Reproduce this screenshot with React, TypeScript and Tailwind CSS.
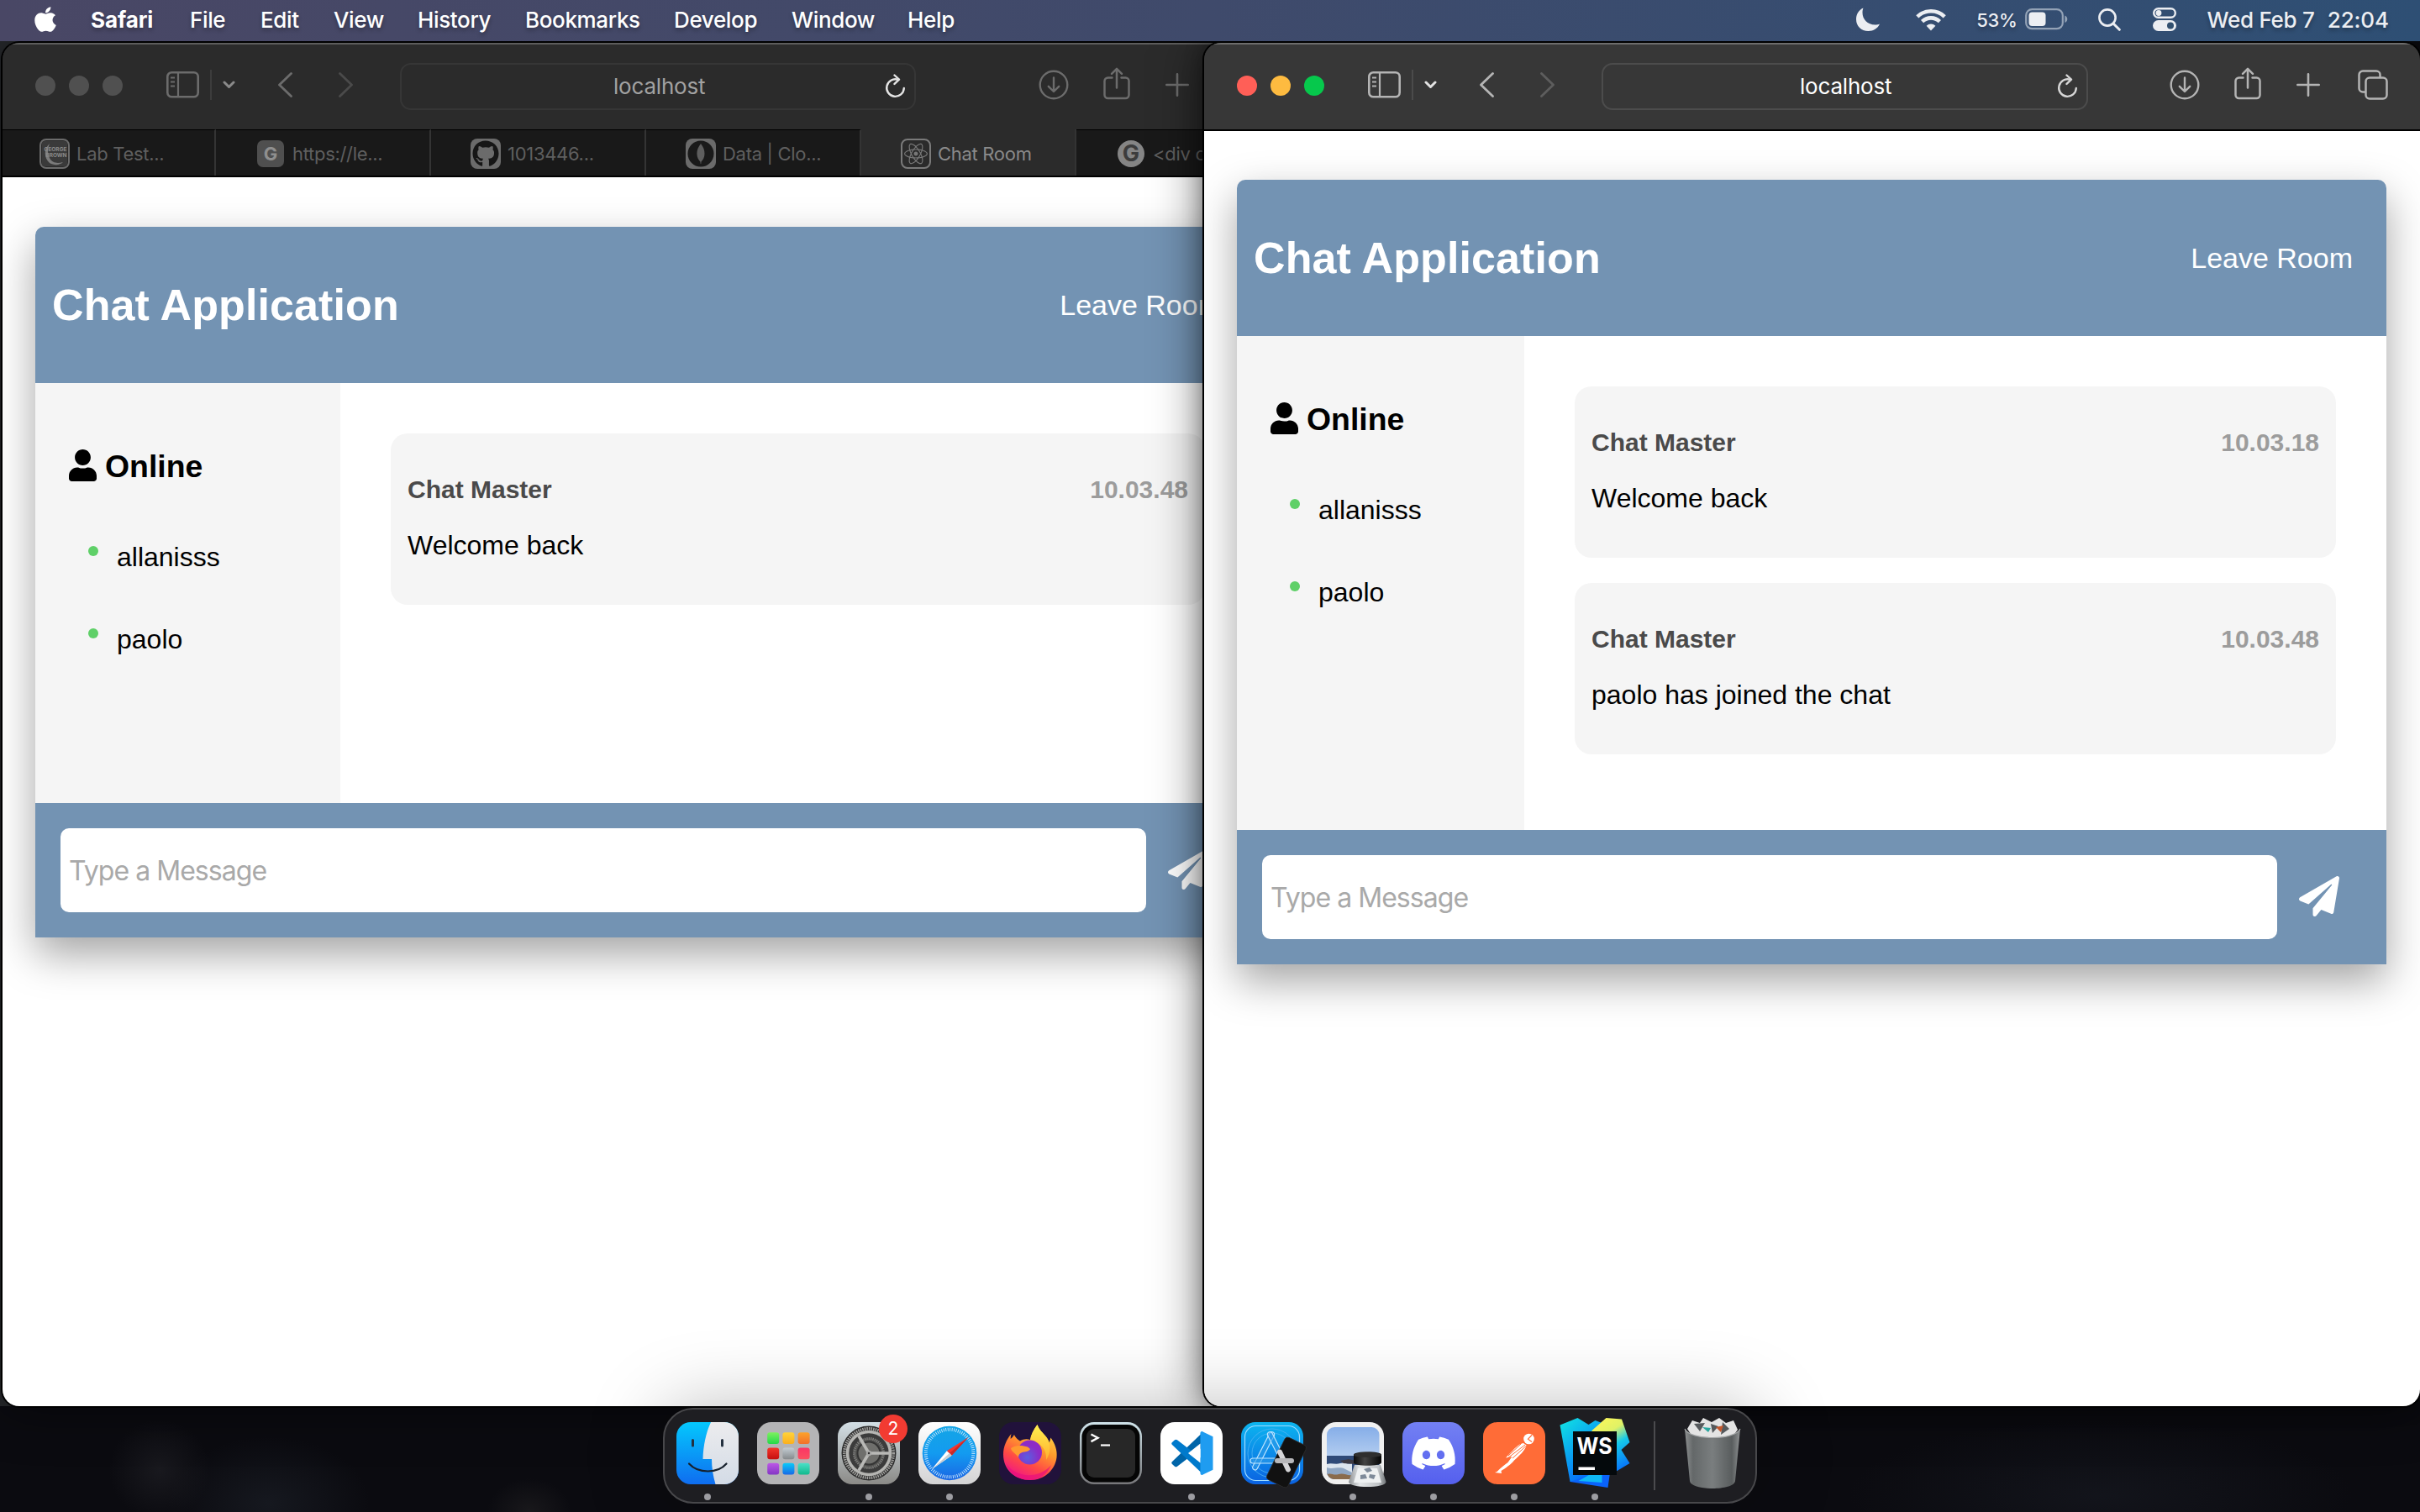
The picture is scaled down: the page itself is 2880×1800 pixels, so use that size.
import type { ReactNode } from "react";
import { FaApple, FaGithub, FaReact, FaDiscord, FaUser, FaPaperPlane } from "react-icons/fa";

/* ---------- menu bar ---------- */

const menus = [
  { label: "File", cls: "w-[84px]" },
  { label: "Edit", cls: "w-[87px]" },
  { label: "View", cls: "w-[100px]" },
  { label: "History", cls: "w-[128px]" },
  { label: "Bookmarks", cls: "w-[177px]" },
  { label: "Develop", cls: "w-[140px]" },
  { label: "Window", cls: "w-[138px]" },
  { label: "Help", cls: "w-[90px]" },
];

function MenuBar() {
  return (
    <header className="relative z-30 flex h-[49px] w-full items-center bg-linear-to-r from-[#494765] via-[#3f4a6b] to-[#2e4f74] pb-[3px] text-[26px] tracking-[-0.35px] text-white [text-shadow:0_3px_5px_rgba(0,0,0,0.3)]">
      <FaApple className="ml-[41px] h-[34px] w-[26px]" preserveAspectRatio="none" />
      <span className="ml-[41px] w-[118px] shrink-0 font-bold tracking-[-0.1px]">Safari</span>
      {menus.map((m) => (
        <span key={m.label} className={`shrink-0 font-medium whitespace-nowrap ${m.cls}`}>
          {m.label}
        </span>
      ))}
      <div className="ml-auto flex items-center pr-[37px] text-[#eceef2]">
        <svg className="h-[30px] w-[30px]" viewBox="0 0 30 30">
          <path d="M9.5 1.5C3.500 4 1 9.500 1 15c0 8 6 14 14.500 14 6 0 11-3 13.500-8.500-1.500.6-3.500 1-5.500 1C14.500 21.500 8.500 15 8.500 7c0-2 .3-4 1-5.500z" fill="currentColor" />
        </svg>
        <svg className="ml-[42px] h-[27px] w-[36px]" viewBox="0 0 36 27" fill="none" stroke="currentColor">
          <path d="M1.800 9.800a23.500 23.500 0 0 1 32.400 0" strokeWidth="4.600" />
          <path d="M7.600 15.600a15 15 0 0 1 20.800 0" strokeWidth="4.600" />
          <path d="M18 26.500l-5.400-5.800a8 8 0 0 1 10.800 0z" fill="currentColor" stroke="none" />
        </svg>
        <span className="ml-[36px] pt-[2px] text-[22px] font-medium tracking-[-0.4px]">53%</span>
        <svg className="ml-[10px] h-[26px] w-[51px]" viewBox="0 0 51 26">
          <rect x="1.200" y="1.200" width="43.600" height="23" rx="7" fill="none" stroke="#93a2b6" strokeWidth="2.200" />
          <rect x="4.500" y="4.500" width="20" height="16.500" rx="4" fill="currentColor" />
          <path d="M47.300 8.500c2 .8 3 2.400 3 4.200s-1 3.400-3 4.200z" fill="#93a2b6" />
        </svg>
        <svg className="ml-[36px] h-[27px] w-[27px]" viewBox="0 0 27 27" fill="none" stroke="currentColor" strokeLinecap="round">
          <circle cx="11" cy="11" r="9.600" strokeWidth="2.600" />
          <path d="M18 18l7.300 7.300" strokeWidth="3" />
        </svg>
        <svg className="ml-[38px] h-[28px] w-[28px]" viewBox="0 0 28 28">
          <rect x="1.200" y="1.200" width="25.600" height="10.600" rx="5.300" fill="none" stroke="currentColor" strokeWidth="2.400" />
          <circle cx="7" cy="6.500" r="3.400" fill="currentColor" />
          <rect x="0" y="15" width="28" height="13" rx="6.500" fill="currentColor" />
          <circle cx="21" cy="21.500" r="4" fill="#32506f" />
        </svg>
        <span className="ml-[36px] font-medium whitespace-nowrap tracking-[-0.25px]">Wed Feb 7</span>
        <span className="ml-[15px] font-medium tracking-[-0.1px]">22:04</span>
      </div>
    </header>
  );
}

/* ---------- Safari chrome ---------- */

function SidebarIcon() {
  return (
    <svg className="h-[32px] w-[39px] shrink-0" viewBox="0 0 39 32" fill="none" stroke="currentColor">
      <rect x="1.300" y="1.300" width="36.400" height="29" rx="5" strokeWidth="2.600" />
      <path d="M14 1v30" strokeWidth="2.200" />
      <path d="M5 7.500h5M5 12.500h5M5 17.500h5" strokeWidth="2" />
    </svg>
  );
}

function ReloadIcon() {
  return (
    <svg className="h-[29px] w-[25px] shrink-0" viewBox="0 0 25 29" fill="none" stroke="currentColor" strokeWidth="2.400" strokeLinecap="round" strokeLinejoin="round">
      <path d="M15.500 6.700A10.300 10.300 0 1 0 22.800 17" />
      <path d="M11.500 1.500l5.500 5.200-5.500 5.200" />
    </svg>
  );
}

function DownloadIcon() {
  return (
    <svg className="h-[36px] w-[36px] shrink-0" viewBox="0 0 36 36" fill="none" stroke="currentColor" strokeWidth="2.400" strokeLinecap="round" strokeLinejoin="round">
      <circle cx="18" cy="18" r="16.300" />
      <path d="M18 9.500v16M11.800 19.800l6.200 6.200 6.200-6.200" />
    </svg>
  );
}

function ShareIcon() {
  return (
    <svg className="h-[39px] w-[32px] shrink-0" viewBox="0 0 32 39" fill="none" stroke="currentColor" strokeWidth="2.500" strokeLinecap="round" strokeLinejoin="round">
      <path d="M10.500 12.500H5.500a4 4 0 0 0-4 4V33a4 4 0 0 0 4 4h21a4 4 0 0 0 4-4V16.500a4 4 0 0 0-4-4h-5" />
      <path d="M16 24.500V2M10 7.800L16 1.800l6 6" />
    </svg>
  );
}

function PlusIcon() {
  return (
    <svg className="h-[28px] w-[28px] shrink-0" viewBox="0 0 28 28" fill="none" stroke="currentColor" strokeWidth="2.600" strokeLinecap="round">
      <path d="M14 1.300v25.400M1.300 14h25.400" />
    </svg>
  );
}

function TabsIcon() {
  return (
    <svg className="h-[36px] w-[36px] shrink-0" viewBox="0 0 36 36" fill="none" stroke="currentColor" strokeWidth="2.500" strokeLinejoin="round">
      <rect x="9.500" y="9.500" width="25" height="25" rx="4.500" />
      <path d="M9.500 26.500H6a4.500 4.500 0 0 1-4.500-4.500V6A4.500 4.500 0 0 1 6 1.500h16A4.500 4.500 0 0 1 26.500 6v3.500" />
    </svg>
  );
}

function Chevron({ dir, cls }: { dir: "left" | "right"; cls: string }) {
  return (
    <svg className={`h-[30px] w-[17px] shrink-0 ${cls}`} viewBox="0 0 17 30" fill="none" stroke="currentColor" strokeWidth="2.800" strokeLinecap="round" strokeLinejoin="round">
      <path d={dir === "left" ? "M15.500 1.500L1.500 15l14 13.500" : "M1.500 1.500L15.500 15l-14 13.500"} />
    </svg>
  );
}

function TrafficLights({ active }: { active: boolean }) {
  return (
    <div className="mt-[2px] flex shrink-0 gap-[16px]">
      <span className={`size-[24px] rounded-full ${active ? "bg-[#ff5f57]" : "bg-[#505050]"}`} />
      <span className={`size-[24px] rounded-full ${active ? "bg-[#febb40]" : "bg-[#505050]"}`} />
      <span className={`size-[24px] rounded-full ${active ? "bg-[#06c84c]" : "bg-[#505050]"}`} />
    </div>
  );
}

function Toolbar({ active }: { active: boolean }) {
  return (
    <div
      className={`flex h-[103px] shrink-0 items-center overflow-hidden border-t-2 pb-[5px] ${
        active ? "border-[#6d6d6d] bg-[#373737] pl-[39px] text-[#b4b4b4]" : "border-[#5d5d5d] bg-[#2b2b2b] pl-[39px] text-[#6c6c6c]"
      }`}
    >
      <TrafficLights active={active} />
      <div className="ml-[52px] flex shrink-0 items-center">
        <SidebarIcon />
        <span className={`ml-[13px] h-[36px] w-[2px] ${active ? "bg-[#4b4b4b]" : "bg-[#3c3c3c]"}`} />
        <svg className={`ml-[13px] h-[10px] w-[15px] ${active ? "text-[#e2e2e2]" : "text-[#8a8a8a]"}`} viewBox="0 0 15 10" fill="none" stroke="currentColor" strokeWidth="3" strokeLinecap="round" strokeLinejoin="round">
          <path d="M2 2l5.500 5.500L13 2" />
        </svg>
      </div>
      <Chevron dir="left" cls="ml-[51px]" />
      <Chevron dir="right" cls={active ? "ml-[55px] text-[#5d5d5d]" : "ml-[55px] text-[#4a4a4a]"} />
      <div
        className={`mt-[3px] flex h-[56px] shrink-0 items-center rounded-[13px] border-2 pr-[10px] ${
          active ? "ml-[56px] w-[579px] border-[#4c4c4c] pl-[234px] text-white" : "ml-[56px] w-[614px] border-[#363636] pl-[252px] text-[#a2a2a2]"
        }`}
      >
        <span className="text-[26px] tracking-[-0.2px]">localhost</span>
        <span className={`ml-auto ${active ? "text-[#d6d6d6]" : "text-[#e4e4e4]"}`}>
          <ReloadIcon />
        </span>
      </div>
      <span className={`shrink-0 ${active ? "ml-[97px]" : "ml-[146px]"}`}>
        <DownloadIcon />
      </span>
      <span className="mb-[3px] ml-[41px] shrink-0">
        <ShareIcon />
      </span>
      <span className="ml-[42px] shrink-0">
        <PlusIcon />
      </span>
      {active && (
        <span className="ml-[45px] shrink-0">
          <TabsIcon />
        </span>
      )}
    </div>
  );
}

function TabIconBox({ children }: { children: ReactNode }) {
  return <span className="flex size-[36px] shrink-0 items-center justify-center overflow-hidden rounded-[8px] bg-[#6b6b6b]">{children}</span>;
}

const tabs: { label: string; active?: boolean; icon: ReactNode }[] = [
  {
    label: "Lab Test...",
    icon: (
      <span className="flex size-[36px] shrink-0 items-center justify-center rounded-[8px] border-2 border-[#6b6b6b] bg-[#2a2a2a]">
        <svg className="size-[30px]" viewBox="0 0 30 30">
          <rect width="30" height="30" rx="3" fill="#3a3a3a" />
          <path d="M9 3C2 9 2 20 9 26c5 3 12 3 16-1-7 2-13 1-16-5-3-6-2-12 0-17z" fill="#7b7b7b" />
          <text x="16" y="12" textAnchor="middle" fontSize="6.500" fontWeight="700" fill="#8a8a8a">GEORGE</text>
          <text x="17" y="19" textAnchor="middle" fontSize="6.500" fontWeight="700" fill="#8a8a8a">BROWN</text>
        </svg>
      </span>
    ),
  },
  {
    label: "https://le...",
    icon: (
      <span className="mx-[2px] flex size-[32px] shrink-0 items-center justify-center rounded-[7px] bg-[#4f4f4f] text-[22px] font-bold text-[#8f8f8f]">G</span>
    ),
  },
  {
    label: "1013446...",
    icon: (
      <TabIconBox>
        <FaGithub className="size-[32px] text-[#161616]" />
      </TabIconBox>
    ),
  },
  {
    label: "Data | Clo...",
    icon: (
      <TabIconBox>
        <svg className="size-[34px]" viewBox="0 0 34 34">
          <circle cx="17" cy="17" r="15.500" fill="#1a1a1a" />
          <path d="M17 5c3 4 4.500 7.500 4.500 12 0 4.500-2 7.500-4 9.500L17.300 29h-.6l-.3-2.500c-2-2-4-5-4-9.500 0-4.500 1.600-8 4.600-12z" fill="#5f5f5f" />
        </svg>
      </TabIconBox>
    ),
  },
  {
    label: "Chat Room",
    active: true,
    icon: (
      <span className="flex size-[36px] shrink-0 items-center justify-center rounded-[8px] border-2 border-[#7a7a7a]">
        <FaReact className="size-[28px] text-[#777]" />
      </span>
    ),
  },
  {
    label: "<div class...",
    icon: (
      <span className="mx-[2px] flex size-[32px] shrink-0 items-center justify-center rounded-full bg-[#858585] text-[27px] font-bold text-[#3c3c3c]">G</span>
    ),
  },
];

function TabBar() {
  return (
    <div className="flex h-[57px] shrink-0 border-b-2 border-black">
      {tabs.map((t, i) => (
        <div
          key={t.label}
          className={`flex shrink-0 items-center gap-[8px] border-r-2 ${
            t.active ? "border-[#333] bg-[#2b2b2b] pt-[3px] text-[#8a8a8a]" : "border-t border-t-black border-r-[#343434] bg-[#191919] pt-[2px] text-[#5f5f5f]"
          } ${i === 0 ? "w-[254px] pl-[44px]" : "w-[256px] pl-[47px]"}`}
        >
          {t.icon}
          <span className="text-[22px] tracking-[-0.3px] whitespace-nowrap">{t.label}</span>
        </div>
      ))}
    </div>
  );
}

/* ---------- chat page ---------- */

interface Message {
  from: string;
  time: string;
  text: string;
}

function ChatPage({ messages, size, margin }: { messages: Message[]; size: string; margin: string }) {
  return (
    <div className="flex-1 overflow-hidden bg-white">
      <div className={`rounded-t-[10px] font-['Liberation_Sans',Arial,sans-serif] text-[32px] text-black shadow-[0_20px_50px_rgba(0,0,0,0.36)] ${margin}`}>
        <div className="flex h-[186px] items-center justify-between rounded-t-[10px] bg-[#7393b3] px-[20px] text-white">
          <h1 className="text-[52px] font-bold tracking-[0.1px]">Chat Application</h1>
          <a className="mr-[20px] pt-[1px] text-[34px]">Leave Room</a>
        </div>
        <div className={`flex bg-white ${size}`}>
          <aside className="w-1/4 shrink-0 bg-[#f5f5f5] pt-[77px] pl-[40px]">
            <h3 className="flex h-[44px] items-center gap-[10px] text-[37.4px] leading-[44px] font-bold">
              <FaUser className="mb-[2px] h-[38px] w-[33px]" preserveAspectRatio="none" />
              Online
            </h3>
            <ul className="mt-[68px] flex flex-col gap-[62px] leading-[36px]">
              {["allanisss", "paolo"].map((u) => (
                <li key={u} className="flex h-[36px] items-start">
                  <span className="mt-[5px] mr-[22px] ml-[23px] size-[12px] rounded-full bg-[#5fd068]" />
                  {u}
                </li>
              ))}
            </ul>
          </aside>
          <section className="flex flex-1 flex-col gap-[30px] p-[60px]">
            {messages.map((m) => (
              <article key={m.time} className="h-[204px] shrink-0 rounded-[20px] bg-[#f5f5f5] px-[20px] pt-[50px]">
                <div className="flex justify-between text-[30px] leading-[34px] font-bold">
                  <span className="text-[#4a4a4a]">{m.from}</span>
                  <span className="text-[#9c9c9c]">{m.time}</span>
                </div>
                <p className="mt-[31px] leading-[36px]">{m.text}</p>
              </article>
            ))}
          </section>
        </div>
        <form className="flex h-[160px] items-center bg-[#7393b3] pr-[56px] pl-[30px]">
          <input
            className="h-[100px] min-w-0 flex-1 rounded-[10px] bg-white px-[10px] font-['Inter',sans-serif] text-[32px] tracking-[-0.95px] placeholder:text-[#a9a9a9]"
            placeholder="Type a Message"
          />
          <FaPaperPlane className="mb-[2px] ml-[26px] size-[48px] shrink-0 text-white" />
        </form>
      </div>
    </div>
  );
}

/* ---------- dock ---------- */

function Tile({ children }: { children: ReactNode }) {
  return (
    <svg className="size-[74px] overflow-visible" viewBox="0 0 74 74">
      {children}
    </svg>
  );
}

function Finder() {
  return (
    <Tile>
      <defs>
        <linearGradient id="fb" x2="0" y2="1"><stop stopColor="#04c8fd" /><stop offset="1" stopColor="#0f6df0" /></linearGradient>
        <linearGradient id="fw" x2="0" y2="1"><stop stopColor="#ececee" /><stop offset="1" stopColor="#d3dbe6" /></linearGradient>
        <clipPath id="fc"><rect width="74" height="74" rx="17" /></clipPath>
      </defs>
      <g clipPath="url(#fc)">
        <rect width="74" height="74" fill="url(#fb)" />
        <path d="M41 0C35 13 32 28 31.500 44h10.500c0 10 1.500 20 4.500 30H74V0z" fill="url(#fw)" />
      </g>
      <path d="M19.500 21.500v6.500M54.500 21.500v6.500" stroke="#23303f" strokeWidth="3" strokeLinecap="round" />
      <path d="M15 49.500c11 12 34 12 44.500 0" fill="none" stroke="#16202c" strokeWidth="2.200" strokeLinecap="round" />
    </Tile>
  );
}

const pads = [
  ["#7df05f", "#23d94a"], ["#ffd23a", "#fbaf1c"], ["#fda22a", "#f2702a"],
  ["#f5352b", "#c50f0f"], ["#c3ccd2", "#85898c"], ["#fb3565", "#fb5060"],
  ["#bd57e6", "#8336c4"], ["#08cbf9", "#1769e6"], ["#4be0c8", "#12b98d"],
];

function Launchpad() {
  return (
    <Tile>
      <rect width="74" height="74" rx="17" fill="#b4b4b6" />
      {pads.map(([a, b], i) => (
        <g key={a}>
          <linearGradient id={`lp${i}`} x2="0" y2="1"><stop stopColor={a} /><stop offset="1" stopColor={b} /></linearGradient>
          <rect x={12.200 + (i % 3) * 18.200} y={12.300 + Math.floor(i / 3) * 18.200} width="14" height="13.800" rx="3" fill={`url(#lp${i})`} />
        </g>
      ))}
    </Tile>
  );
}

function Settings() {
  return (
    <Tile>
      <linearGradient id="sg" x2="0" y2="1"><stop stopColor="#d3dfe5" /><stop offset="1" stopColor="#8b8a87" /></linearGradient>
      <rect width="74" height="74" rx="17" fill="url(#sg)" />
      <circle cx="37" cy="37" r="32.500" fill="#2c2c2c" />
      <circle cx="37" cy="37" r="29.300" fill="none" stroke="#a3a3a1" strokeWidth="3.500" strokeDasharray="1.500 1.100" />
      <circle cx="37" cy="37" r="25.500" fill="#3b3b3b" stroke="#b5b5b2" strokeWidth="3.600" />
      <circle cx="37" cy="37" r="17.500" fill="#525250" stroke="#7d7d7b" strokeWidth="3" strokeDasharray="1.400 1" />
      <circle cx="37" cy="37" r="13.500" fill="#6f6f6c" stroke="#343434" strokeWidth="2" />
      <path d="M37 37h24M37 37L25 16.500M37 37L25 57.500" stroke="#b9b9b6" strokeWidth="3.600" />
      <circle cx="37" cy="37" r="3.200" fill="#a9a9a7" />
      <circle cx="37" cy="37" r="1.200" fill="#2b2b2b" />
    </Tile>
  );
}

function SafariIcon() {
  return (
    <Tile>
      <defs>
        <linearGradient id="sw" x2="0" y2="1"><stop stopColor="#fff" /><stop offset="1" stopColor="#d3d3d4" /></linearGradient>
        <linearGradient id="sb" x2="0" y2="1"><stop stopColor="#14a5e6" /><stop offset="0.500" stopColor="#139bf0" /><stop offset="1" stopColor="#1a66e4" /></linearGradient>
      </defs>
      <rect width="74" height="74" rx="17" fill="url(#sw)" />
      <circle cx="37" cy="37" r="32.300" fill="url(#sb)" />
      <circle cx="37" cy="37" r="28.300" fill="none" stroke="#cfeafc" strokeWidth="4" strokeDasharray="0.900 1.570" />
      <path d="M59.500 18L33.800 34.200l5.800 5.600z" fill="#f5352f" />
      <path d="M59.500 18L37 37l2.600 2.800z" fill="#c92a28" />
      <path d="M16 56l17.800-21.800 5.800 5.600z" fill="#fff" />
      <path d="M16 56l21-19 2.600 2.800z" fill="#c9ccd0" />
    </Tile>
  );
}

function Firefox() {
  return (
    <Tile>
      <defs>
        <linearGradient id="ff" x1="0.800" y1="0" x2="0.300" y2="1"><stop stopColor="#ffe14a" /><stop offset="0.400" stopColor="#ff9a2c" /><stop offset="0.700" stopColor="#ff4a45" /><stop offset="1" stopColor="#f0128a" /></linearGradient>
        <radialGradient id="fp" cx="0.400" cy="0.700"><stop stopColor="#5a5fe0" /><stop offset="1" stopColor="#8d2bc6" /></radialGradient>
        <linearGradient id="fy" x2="0" y2="1"><stop stopColor="#fff04f" /><stop offset="1" stopColor="#ffb02f" /></linearGradient>
      </defs>
      <rect width="74" height="74" rx="17" fill="#21123b" />
      <path d="M14.500 14c-.6 2-1 4-.8 6 2-1.500 3.500-3.500 4.200-5 1.500 3 4 5.500 7 7.500C29 20 33 19.500 37 21c1-6 4-12 8.500-18 2 6 6 9 10.500 14.500 1.500 1.800 3 4.500 3.800 7l1.700-6c5 7 8 15 7 23.500C66.500 58 53 69 37 69 19 69 5 57 5 38.500 5 29 9 20.500 14.500 14z" fill="url(#ff)" />
      <path d="M37 21c1-6 4-12 8.500-18 2 6 6 9 10.500 14.500C62 25 62 36 56 45c1-10-4-20-19-24z" fill="url(#fy)" />
      <circle cx="36.500" cy="36" r="14.500" fill="url(#fp)" />
      <path d="M14 31c5-4 14-3.500 20-1.500l3 2.500c-1 3-7 3.500-9.500 4-3 1-4.500 3-4.500 6-3-5-8-6-9-11z" fill="#ff9a30" />
      <path d="M8 48c8 17 38 22 54 3-5 12-15 18-25 18C22 69 12 61 8 48z" fill="#e80f7c" opacity="0.700" />
    </Tile>
  );
}

function Terminal() {
  return (
    <Tile>
      <linearGradient id="tg" x2="0" y2="1"><stop stopColor="#cfe3ea" /><stop offset="1" stopColor="#77777a" /></linearGradient>
      <rect width="74" height="74" rx="17" fill="url(#tg)" />
      <rect x="2.500" y="3" width="69" height="68.500" rx="14.500" fill="#050505" />
      <rect x="8" y="8" width="58" height="58" rx="9" fill="#272727" />
      <path d="M13.500 14.500l8 4.300-8 4.300" fill="none" stroke="#fff" strokeWidth="2.400" />
      <path d="M25 27.500h11" stroke="#fff" strokeWidth="2.200" />
    </Tile>
  );
}

function VSCode() {
  return (
    <Tile>
      <rect width="74" height="74" rx="17" fill="#fff" />
      <path d="M51 11.500L14 47c-1 1-1 2 0 3l3 2.700c1 .8 2 .8 3 0L51 29z" fill="#0065a9" />
      <path d="M51 62.500L14 27c-1-1-1-2 0-3l3-2.700c1-.8 2-.8 3 0L51 45z" fill="#007acc" />
      <path d="M50 11.200l12.500 6v39.600L50 62.800c-1.500.6-2.500-.5-2.500-2V13.200c0-1.500 1-2.600 2.500-2z" fill="#1f9cf0" />
      <path d="M47.500 25.500v23L33 37z" fill="#fff" />
    </Tile>
  );
}

function Simulator() {
  return (
    <Tile>
      <linearGradient id="xg" x2="0" y2="1"><stop stopColor="#0cb5ef" /><stop offset="1" stopColor="#0b62e2" /></linearGradient>
      <rect width="74" height="74" rx="17" fill="url(#xg)" />
      <rect x="4.500" y="4.500" width="65" height="65" rx="13" fill="none" stroke="#9fdcff" strokeWidth="1.200" />
      <circle cx="37" cy="37" r="29" fill="none" stroke="#4fb4f2" strokeWidth="0.800" />
      <circle cx="37" cy="37" r="24" fill="none" stroke="#4fb4f2" strokeWidth="0.800" />
      <g fill="#2f9bea" fillOpacity="0.600" stroke="#bfe5ff" strokeWidth="1.200">
        <rect x="-3" y="0" width="6" height="50" rx="3" transform="translate(38 12) rotate(27)" />
        <rect x="-3" y="0" width="6" height="50" rx="3" transform="translate(33 12) rotate(-27)" />
        <rect x="11" y="43" width="52" height="6" rx="3" />
      </g>
      <g transform="translate(54 48) rotate(26)">
        <rect x="-14" y="-28" width="28" height="56" rx="4" fill="#111" stroke="#2c2c2c" strokeWidth="0.800" />
      </g>
      <path d="M46 35.500L56 56.500" stroke="#d5d5d7" strokeWidth="6" strokeLinecap="round" />
      <path d="M43 46h17" stroke="#b8b8ba" strokeWidth="6" strokeLinecap="round" />
    </Tile>
  );
}

function Preview() {
  return (
    <Tile>
      <defs>
        <linearGradient id="pk" x2="0" y2="1"><stop stopColor="#86aee8" /><stop offset="1" stopColor="#b3cdf0" /></linearGradient>
        <clipPath id="pc"><rect x="6" y="6" width="62.500" height="62" rx="9" /></clipPath>
        <linearGradient id="pj" x2="1" y2="0"><stop stopColor="#8f9396" /><stop offset="0.300" stopColor="#e4e7e9" /><stop offset="0.800" stopColor="#bfc3c6" /><stop offset="1" stopColor="#6f7376" /></linearGradient>
        <linearGradient id="pl" x2="1" y2="0"><stop stopColor="#0b0b0b" /><stop offset="0.400" stopColor="#444" /><stop offset="1" stopColor="#050505" /></linearGradient>
      </defs>
      <rect width="74" height="74" rx="17" fill="#f0f0f0" />
      <g clipPath="url(#pc)">
        <rect x="6" y="6" width="63" height="35" fill="url(#pk)" />
        <rect x="6" y="40" width="63" height="30" fill="#2f4a78" />
        <path d="M6 50c6-2 10 1 16-1s8 2 14 0v12H6z" fill="#dbe4ee" />
        <path d="M6 54c8 3 14-2 22 2l8 4v4H6z" fill="#8fa6c3" />
        <path d="M6 62c6-2 8 2 14 0s10 2 16 1v7H6z" fill="#8a6b4c" />
        <path d="M22 46l10-2 8 2v4l-14-1z" fill="#3c3a44" />
      </g>
      <path d="M39 51h31l6.500 20c0 8-44.500 8-44.500 0z" fill="url(#pj)" />
      <path d="M43 55h23l5 17H38z" fill="#eef1f2" />
      <path d="M50 56l7-2 3 4-6 2zM46 63l6-1 2 5-8 1zM57 62l7 1-2 5-6-2z" fill="#7d8a99" />
      <path d="M38 39c0-5 33-5 33 0v9c0 5-33 5-33 0z" fill="url(#pl)" />
      <ellipse cx="54.500" cy="39" rx="16.500" ry="3" fill="#2f2f2f" />
    </Tile>
  );
}

function Discord() {
  return (
    <Tile>
      <linearGradient id="dg" x2="0" y2="1"><stop stopColor="#7380f3" /><stop offset="1" stopColor="#5560ee" /></linearGradient>
      <rect width="74" height="74" rx="17" fill="url(#dg)" />
      <FaDiscord x={9} y={9} size={56} color="#fff" />
    </Tile>
  );
}

function Postman() {
  return (
    <Tile>
      <rect width="74" height="74" rx="17" fill="#ff6c37" />
      <circle cx="54.500" cy="20" r="6.300" fill="#fff" />
      <path d="M58 15.500l-4.500 4.700 4.500 3.300" fill="none" stroke="#ff6c37" strokeWidth="1.200" />
      <path d="M48 25c-6 1-11 7-15 11l-6 6.500 7.500-1.500-5 7c-4 3-8 6-13 11l-2.500 1 8 1-.5-3c5-3 12-8 15.500-12.500C43 40 50 34 51.500 27.500z" fill="#fff" />
      <path d="M50 27L29 43M45.500 25.500L30 40M51 28.500L35 43" stroke="#ff6c37" strokeWidth="1" />
    </Tile>
  );
}

function WebStorm() {
  return (
    <Tile>
      <defs>
        <linearGradient id="wa" x1="0" y1="0" x2="0.600" y2="1"><stop stopColor="#12e6e0" /><stop offset="0.500" stopColor="#0aa8f0" /><stop offset="1" stopColor="#0766fb" /></linearGradient>
        <linearGradient id="wb" x1="0.300" y1="0" x2="0.800" y2="1"><stop stopColor="#fbf65a" /><stop offset="0.300" stopColor="#e0f266" /><stop offset="0.550" stopColor="#16c9ea" /><stop offset="1" stopColor="#0772fb" /></linearGradient>
      </defs>
      <g transform="translate(-2.500 0)">
        <path d="M-2 3.500L19-5l13 8 8-5 8 3v70L10 71z" fill="url(#wa)" />
        <path d="M10 71l36-12 12-2-3 21z" fill="#0a63fb" />
        <path d="M36 10L53-5l18.500 1.500L81 24 71 33l10 16-15 9H44L30 40z" fill="url(#wb)" />
        <path d="M20 70l28-16v18z" fill="#0fb8f5" />
        <rect x="13.500" y="11" width="52" height="52" fill="#04090c" />
        <text x="18" y="38" fontSize="27" fontWeight="700" fill="#fff" textLength="42" lengthAdjust="spacingAndGlyphs">WS</text>
        <rect x="20" y="53.500" width="19.500" height="3.500" fill="#fff" />
      </g>
    </Tile>
  );
}

function Trash() {
  return (
    <svg className="h-[86px] w-[68px] overflow-visible" viewBox="0 0 68 86">
      <linearGradient id="tr" x2="1" y2="0"><stop stopColor="#8d9091" /><stop offset="0.150" stopColor="#646869" /><stop offset="0.500" stopColor="#7a7e7f" /><stop offset="0.850" stopColor="#595d5e" /><stop offset="1" stopColor="#909394" /></linearGradient>
      <path d="M4 14L10 4l9 3 4-6 10 5 9-5 8 6 9-3 5 11-8 11H12z" fill="#e4e4e4" />
      <path d="M12 8l7 9 6-10zM32 8l9 3-7 8zM46 6l8 8-10 7z" fill="#55595c" />
      <path d="M38 12l6 6 3-8z" fill="#c4572c" />
      <path d="M22 12l7 6 3-5z" fill="#2aa7a0" />
      <path d="M1 14c6 14 60 14 66 0l-6 62c-1 12-53 12-54 0z" fill="url(#tr)" />
      <path d="M1 14c6 14 60 14 66 0" fill="none" stroke="#a5a8a9" strokeWidth="1.200" />
    </svg>
  );
}

const dock: { name: string; running: boolean; icon: ReactNode; badge?: string }[] = [
  { name: "finder", running: true, icon: <Finder /> },
  { name: "launchpad", running: false, icon: <Launchpad /> },
  { name: "settings", running: true, icon: <Settings />, badge: "2" },
  { name: "safari", running: true, icon: <SafariIcon /> },
  { name: "firefox", running: false, icon: <Firefox /> },
  { name: "terminal", running: false, icon: <Terminal /> },
  { name: "vscode", running: true, icon: <VSCode /> },
  { name: "simulator", running: false, icon: <Simulator /> },
  { name: "preview", running: true, icon: <Preview /> },
  { name: "discord", running: true, icon: <Discord /> },
  { name: "postman", running: true, icon: <Postman /> },
  { name: "webstorm", running: true, icon: <WebStorm /> },
];

function Dock() {
  return (
    <nav className="absolute top-[1676px] left-[789px] z-20 flex h-[114px] w-[1302px] rounded-[36px] border-2 border-[#48484b] bg-[#1e1e22] pl-[3px] shadow-[0_0_90px_rgba(0,0,0,0.27)]">
      {dock.map((d) => (
        <div key={d.name} className="relative flex w-[96px] shrink-0 flex-col items-center pt-[15px]">
          {d.icon}
          {d.running && <span className="mt-[11px] size-[8px] rounded-full bg-[#9d9da2]" />}
          {d.badge && (
            <span className="absolute top-[6px] right-[2px] flex size-[34px] items-center justify-center rounded-full bg-[#f23b32] text-[21px] text-white">
              {d.badge}
            </span>
          )}
        </div>
      ))}
      <span className="mt-[14px] ml-[22px] h-[82px] w-[2px] bg-[#4b4b4e]" />
      <span className="mt-[9px] ml-[34px]">
        <Trash />
      </span>
    </nav>
  );
}

/* ---------- desktop ---------- */

export default function App() {
  return (
    <div className="relative h-[1800px] w-[2880px] overflow-hidden bg-[#0b0b10] font-['Inter',sans-serif]">
      <div className="absolute inset-x-0 bottom-0 h-[140px] bg-[radial-gradient(ellipse_60px_60px_at_190px_90px,rgba(50,50,56,0.35),transparent),radial-gradient(ellipse_120px_80px_at_320px_130px,rgba(38,44,54,0.4),transparent),radial-gradient(ellipse_50px_40px_at_630px_140px,rgba(50,48,48,0.35),transparent),radial-gradient(ellipse_300px_90px_at_2500px_120px,rgba(30,34,44,0.4),transparent)]" />
      <MenuBar />
      <div className="absolute top-[49px] left-0 h-[1625px] w-[40px] bg-[#26282b]" />
      <main>
        <div className="absolute top-[51px] left-[3px] flex h-[1623px] w-[1531px] flex-col overflow-hidden rounded-[20px] shadow-[0_0_0_2px_#000,0_0_60px_rgba(0,0,0,0.5)]">
          <Toolbar active={false} />
          <TabBar />
          <ChatPage
            margin="mt-[59px] ml-[39px] w-[1452px]"
            size="h-[500px]"
            messages={[{ from: "Chat Master", time: "10.03.48", text: "Welcome back" }]}
          />
        </div>
        <div className="absolute top-[51px] left-[1433px] z-10 flex h-[1623px] w-[1447px] flex-col overflow-hidden rounded-[20px] shadow-[0_0_0_2px_#000,0_0_60px_rgba(0,0,0,0.6),0_0_24px_rgba(0,0,0,0.3)]">
          <Toolbar active />
          <div className="h-[2px] shrink-0 bg-black" />
          <ChatPage
            margin="mt-[58px] ml-[39px] w-[1368px]"
            size="h-[588px]"
            messages={[
              { from: "Chat Master", time: "10.03.18", text: "Welcome back" },
              { from: "Chat Master", time: "10.03.48", text: "paolo has joined the chat" },
            ]}
          />
        </div>
      </main>
      <Dock />
    </div>
  );
}
